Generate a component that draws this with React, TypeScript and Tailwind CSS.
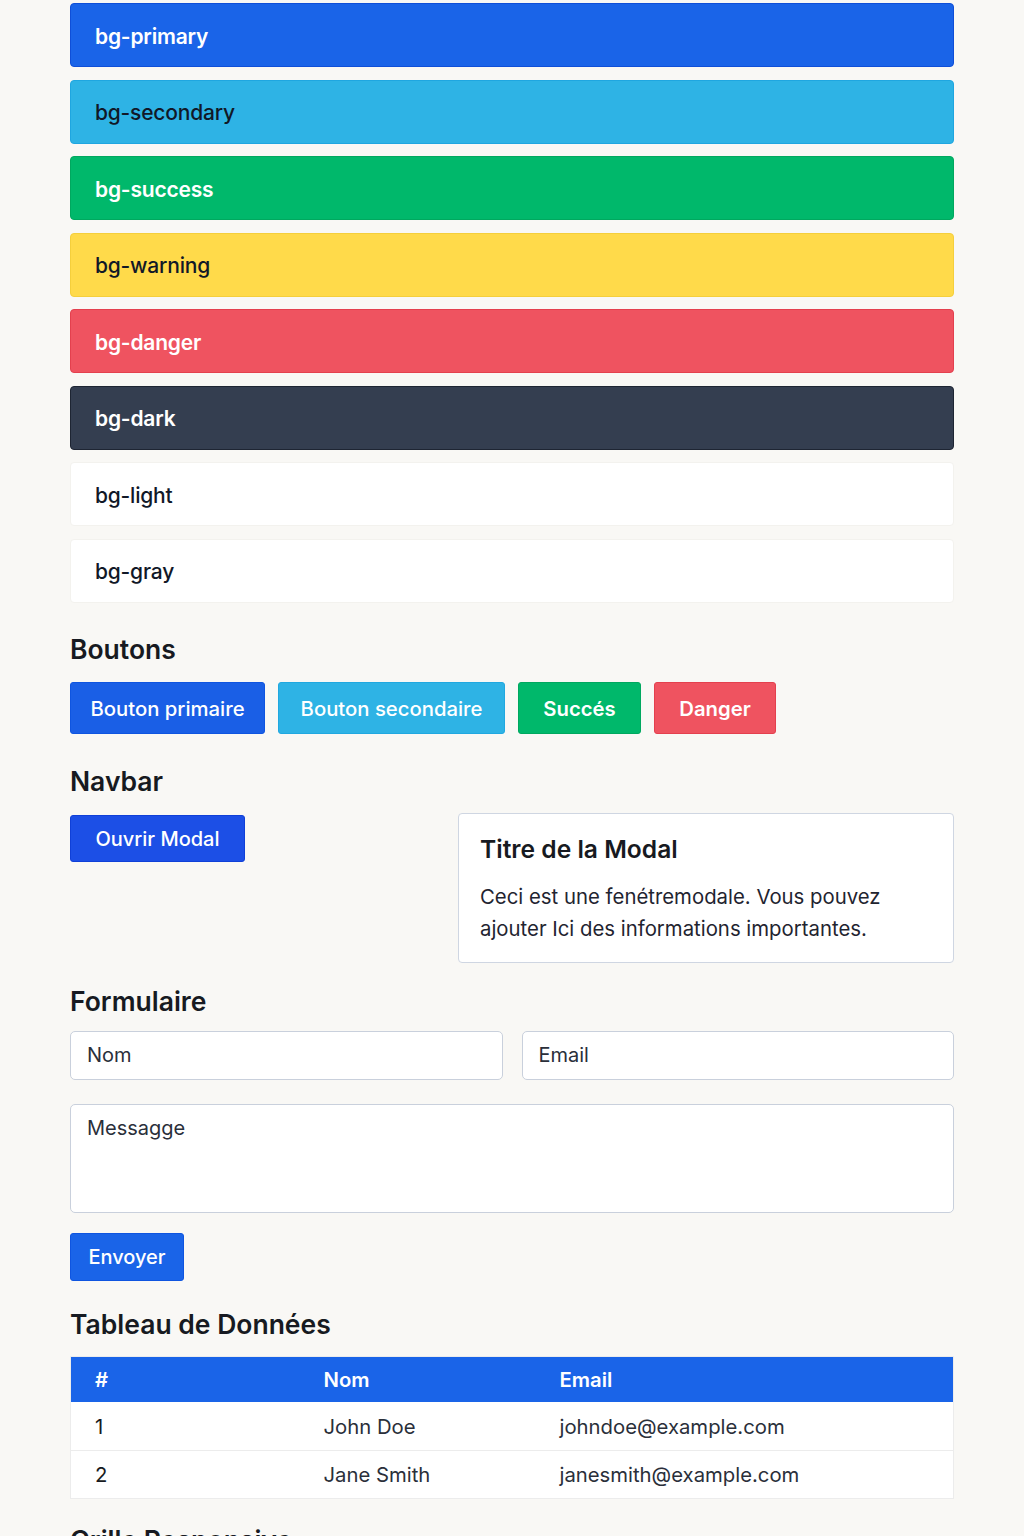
import React from "react";

type Swatch = {
  label: string;
  className: string;
};

const swatches: Swatch[] = [
  { label: "bg-primary", className: "bg-[#1a64e8] border-[#0f4fd8] text-white font-semibold" },
  { label: "bg-secondary", className: "bg-[#2eb3e5] border-[#1fa6e0] text-[#111827] font-medium" },
  { label: "bg-success", className: "bg-[#00b86b] border-[#00a85f] text-white font-semibold" },
  { label: "bg-warning", className: "bg-[#ffda4a] border-[#f5cf3c] text-[#111827] font-medium" },
  { label: "bg-danger", className: "bg-[#ef5360] border-[#e4404e] text-white font-semibold" },
  { label: "bg-dark", className: "bg-[#343e50] border-[#1e2533] text-white font-semibold" },
  { label: "bg-light", className: "bg-white border-[#f3f2ee] text-[#111827] font-medium" },
  { label: "bg-gray", className: "bg-white border-[#f3f2ee] text-[#111827] font-medium" },
];

const rows = [
  { id: 1, name: "John Doe", email: "johndoe@example.com" },
  { id: 2, name: "Jane Smith", email: "janesmith@example.com" },
];

function Heading({ children }: { children: React.ReactNode }) {
  return (
    <h2 className="text-[26.5px] leading-[32px] font-semibold text-[#171a21]">{children}</h2>
  );
}

export default function App() {
  return (
    <div
      className="min-h-[1536px] bg-[#f9f8f5] pt-[3px]"
      style={{ fontFamily: "Inter, 'Noto Sans', sans-serif" }}
    >
      <div className="mx-auto w-[884px]">
        <div className="flex flex-col gap-[12.5px]">
          {swatches.map((s) => (
            <div
              key={s.label}
              className={`flex h-[64px] items-center rounded-[4px] border px-6 pt-[3px] text-[21px] tracking-[-0.2px] ${s.className}`}
            >
              {s.label}
            </div>
          ))}
        </div>

        <div className="mt-[30px]">
          <Heading>Boutons</Heading>
          <div className="mt-[17px] flex gap-[13px] text-[20.3px]">
            <button className="h-[52px] w-[195px] rounded-[3px] border border-[#0f55e0] bg-[#1a5fe6] pt-[3px] font-medium text-white">
              Bouton primaire
            </button>
            <button className="h-[52px] w-[227px] rounded-[3px] border border-[#20a8e0] bg-[#2eb3e5] pt-[3px] font-medium text-white">
              Bouton secondaire
            </button>
            <button className="h-[52px] w-[123px] rounded-[3px] border border-[#00a85f] bg-[#00b86b] pt-[3px] font-semibold text-white">
              Succés
            </button>
            <button className="h-[52px] w-[122px] rounded-[3px] border border-[#e4404e] bg-[#ef5360] pt-[3px] font-semibold text-white">
              Danger
            </button>
          </div>
        </div>

        <div className="mt-[31px]">
          <Heading>Navbar</Heading>
          <div className="mt-[16px] flex items-start">
            <div className="w-[388px] pt-[2px]">
              <button className="h-[47px] w-[175px] rounded-[3px] border border-[#1040d8] bg-[#1c4fe6] pt-[1px] text-[20px] font-medium text-white">
                Ouvrir Modal
              </button>
            </div>
            <div className="h-[150px] flex-1 rounded-[4px] border border-[#cfd6e2] bg-white px-[21px] pt-[19px]">
              <h3 className="text-[24.6px] leading-[32px] font-semibold text-[#171a21]">
                Titre de la Modal
              </h3>
              <p className="mt-[16px] text-[20.35px] leading-[32px] text-[#1f2430]">
                Ceci est une fenétremodale. Vous pouvez
                <br />
                ajouter Ici des informations importantes.
              </p>
            </div>
          </div>
        </div>

        <div className="mt-[22px]">
          <Heading>Formulaire</Heading>
          <div className="mt-[14px] flex gap-[19px]">
            <div className="flex h-[49px] flex-1 items-center rounded-[5px] border border-[#c9d0dc] bg-white px-4 text-[20px] text-[#2a2f3a]">
              Nom
            </div>
            <div className="flex h-[49px] flex-1 items-center rounded-[5px] border border-[#c9d0dc] bg-white px-4 text-[20px] text-[#2a2f3a]">
              Email
            </div>
          </div>
          <div className="mt-[24px] h-[109px] rounded-[5px] border border-[#c9d0dc] bg-white px-4 pt-[9px] text-[20px] leading-[28px] text-[#2a2f3a]">
            Messagge
          </div>
          <button className="mt-[20px] h-[48px] w-[114px] rounded-[3px] border border-[#0f55e0] bg-[#1a64e8] text-[20px] font-medium text-white">
            Envoyer
          </button>
        </div>

        <div className="mt-[27px]">
          <Heading>Tableau de Données</Heading>
          <table className="mt-[16px] w-full border-collapse border border-[#ececec] bg-white text-left text-[20.3px]">
            <thead>
              <tr className="h-[46px] bg-[#1a64e8] text-white">
                <th className="w-[229px] pl-6 pt-[2px] font-semibold">#</th>
                <th className="w-[236px] pl-6 pt-[2px] font-semibold">Nom</th>
                <th className="pl-6 pt-[2px] font-semibold">Email</th>
              </tr>
            </thead>
            <tbody className="text-[#2a2f3a]">
              {rows.map((r) => (
                <tr key={r.id} className="h-[48px] border-b border-[#ececec]">
                  <td className="pl-6 pt-[3px] text-[#171a21]">{r.id}</td>
                  <td className="pl-6 pt-[3px]">{r.name}</td>
                  <td className="pl-6 pt-[3px]">{r.email}</td>
                </tr>
              ))}
            </tbody>
          </table>
        </div>

        <div className="mt-[25px]">
          <Heading>Grille Responsive</Heading>
        </div>
      </div>
    </div>
  );
}
